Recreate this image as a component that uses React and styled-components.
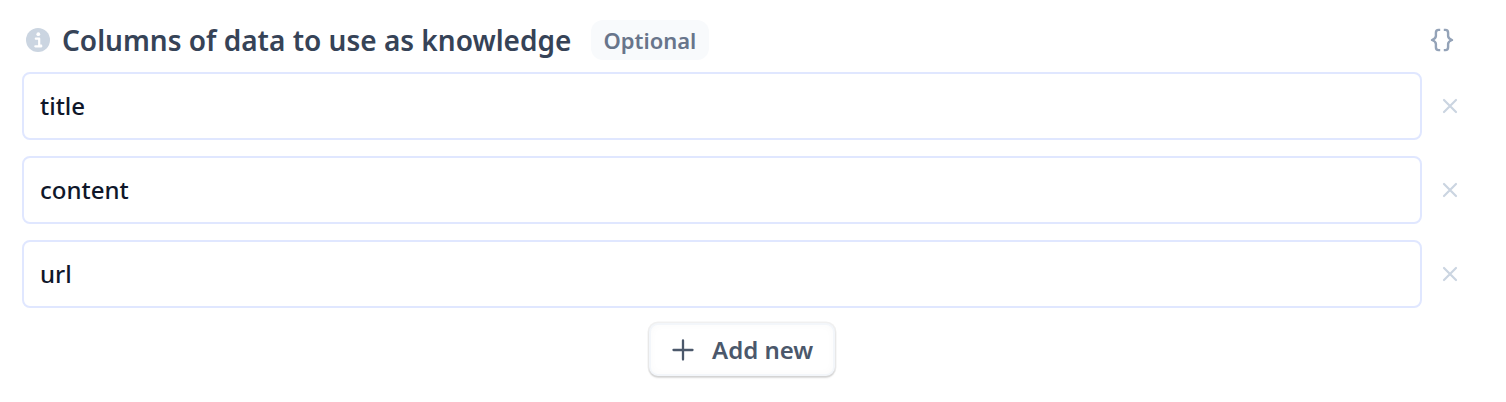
import React from 'react';
import styled, { createGlobalStyle } from 'styled-components';

const Global = createGlobalStyle`
  *, *::before, *::after { box-sizing: border-box; }
  body { margin: 0; background: #fff; font-family: "Noto Sans", sans-serif; }
  button, input { font-family: inherit; }
`;

const Panel = styled.section`
  display: flex;
  flex-direction: column;
  width: 1506px;
  height: 402px;
  padding: 20px 46px 0 22px;
`;

const Header = styled.header`
  display: flex;
  align-items: center;
  height: 40px;
  margin-bottom: 12px;
  padding: 0 6px 0 4px;
`;

const Title = styled.h2`
  margin: 0 20px 0 12px;
  font-size: 28px;
  line-height: 40px;
  font-weight: 600;
  color: #364357;
  white-space: nowrap;
`;

const Badge = styled.span`
  height: 40px;
  padding: 0 13px 0 12px;
  border-radius: 12px;
  background: #f8fafc;
  color: #68758b;
  font-size: 22px;
  font-weight: 600;
  line-height: 41px;
`;

const IconButton = styled.button`
  display: flex;
  padding: 0;
  border: 0;
  background: none;
  color: ${(p) => p.$color};
  margin-left: ${(p) => p.$gap};
`;

const Rows = styled.div`
  display: flex;
  flex-direction: column;
  gap: 16px;
`;

const Row = styled.div`
  display: flex;
  align-items: center;
`;

const Field = styled.input`
  width: 1400px;
  height: 68px;
  padding: 0 16px 2px;
  border: 2px solid #e0e7ff;
  border-radius: 8px;
  background: #fff;
  color: #0f172a;
  font-size: 24px;
  font-weight: 500;
  outline: none;
`;

const AddButton = styled.button`
  display: flex;
  align-items: center;
  align-self: center;
  width: 186px;
  height: 53px;
  margin: 15px 0 0 2px;
  padding: 0 0 0 21px;
  gap: 18px;
  border: 2px solid #f3f6fa;
  border-radius: 9px;
  background: #fff;
  color: #4b586b;
  font-size: 24px;
  font-weight: 600;
  line-height: 32px;
  box-shadow: inset 0 0 8px rgba(0, 0, 0, 0.025), 0 0 0 1.5px rgba(0, 0, 0, 0.06), 0 2px 2px rgba(0, 0, 0, 0.12);
`;

const Label = styled.span`
  padding-top: 1px;
`;

const InfoIcon = () => (
  <svg width="24" height="24" viewBox="0 0 24 24">
    <circle cx="12" cy="12" r="12" fill="#cbd5e1" />
    <circle cx="12.3" cy="6.2" r="1.9" fill="#fff" />
    <path d="M9.8 10.7h3.4v7h2M9.3 18.3h6" fill="none" stroke="#fff" strokeWidth="2.2" strokeLinecap="round" strokeLinejoin="round" />
  </svg>
);

const BracesIcon = () => (
  <svg width="24" height="24" viewBox="0 0 24 24" fill="none" stroke="currentColor" strokeWidth="2.4" strokeLinejoin="round">
    <path d="M10.2 1.9H8.5Q5.9 1.9 5.9 4.7V8Q5.9 10.5 2 12Q5.9 13.5 5.9 16v3.3Q5.9 22.1 8.5 22.1h1.7" />
    <path d="M13.8 1.9h1.7Q18.1 1.9 18.1 4.7V8Q18.1 10.5 22 12Q18.1 13.5 18.1 16v3.3Q18.1 22.1 15.5 22.1h-1.7" />
  </svg>
);

const CloseIcon = () => (
  <svg width="16" height="16" viewBox="0 0 16 16" fill="none" stroke="currentColor" strokeWidth="2.2" strokeLinecap="round">
    <path d="M2 2l12 12M14 2L2 14" />
  </svg>
);

const PlusIcon = () => (
  <svg width="22" height="22" viewBox="0 0 22 22" fill="none" stroke="currentColor" strokeWidth="2.3" strokeLinecap="round">
    <path d="M11 1.5v19M1.5 11h19" />
  </svg>
);

const columns = ['title', 'content', 'url'];

export default function App() {
  return (
    <>
      <Global />
      <Panel>
        <Header>
          <InfoIcon />
          <Title>Columns of data to use as knowledge</Title>
          <Badge>Optional</Badge>
          <IconButton $color="#94a3b8" $gap="auto" aria-label="Insert variable"><BracesIcon /></IconButton>
        </Header>
        <Rows>
          {columns.map((name) => (
            <Row key={name}>
              <Field defaultValue={name} />
              <IconButton $color="#cbd5e1" $gap="20px" aria-label={`Remove ${name}`}><CloseIcon /></IconButton>
            </Row>
          ))}
        </Rows>
        <AddButton><PlusIcon /><Label>Add new</Label></AddButton>
      </Panel>
    </>
  );
}
